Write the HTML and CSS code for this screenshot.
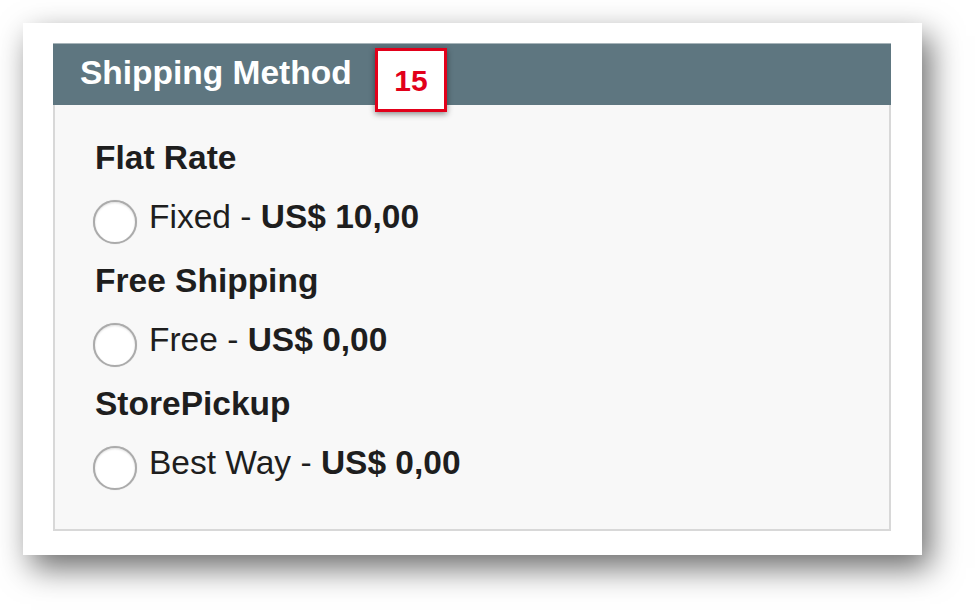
FILE: index.html
```html
<!DOCTYPE html>
<html lang="en">
<head>
<meta charset="utf-8">
<title>Shipping Method</title>
<link rel="stylesheet" href="styles.css">
</head>
<body>
  <div class="page">
    <div class="card">
      <section class="panel">
        <header class="panel-head">
          <h2 class="panel-title">Shipping Method</h2>
          <span class="badge">15</span>
        </header>
        <div class="panel-body">
          <div class="group">
            <h3 class="group-title">Flat Rate</h3>
            <label class="option"><span class="radio"></span><span class="option-text">Fixed - <b>US$ 10,00</b></span></label>
          </div>
          <div class="group">
            <h3 class="group-title">Free Shipping</h3>
            <label class="option"><span class="radio"></span><span class="option-text">Free - <b>US$ 0,00</b></span></label>
          </div>
          <div class="group">
            <h3 class="group-title">StorePickup</h3>
            <label class="option"><span class="radio"></span><span class="option-text">Best Way - <b>US$ 0,00</b></span></label>
          </div>
        </div>
      </section>
    </div>
  </div>
</body>
</html>
```

FILE: styles.css
```css
html, body {
  margin: 0;
  padding: 0;
  background: #ffffff;
}

body {
  font-family: "Liberation Sans", Arial, sans-serif;
  color: #222222;
}

.page {
  width: 978px;
  height: 610px;
  box-sizing: border-box;
  padding: 23px 0 0 23px;
  overflow: hidden;
}

.card {
  width: 899px;
  box-sizing: border-box;
  padding: 20px 31px 24px 30px;
  background: #ffffff;
  box-shadow: 8px 13px 30px rgba(0, 0, 0, 0.58);
}

.panel {
  width: 838px;
}

.panel-head {
  position: relative;
  height: 62px;
  background: #5e7680;
  box-shadow: inset 0 1px 0 #a7b4b9;
  padding-left: 27px;
}

.panel-title {
  margin: 0;
  font-size: 33.5px;
  font-weight: bold;
  line-height: 60px;
  color: #ffffff;
}

.badge {
  position: absolute;
  left: 322px;
  top: 5px;
  width: 72px;
  height: 64px;
  box-sizing: border-box;
  border: 3px solid #e2001a;
  background: #ffffff;
  color: #e2001a;
  font-size: 30px;
  font-weight: bold;
  line-height: 60px;
  text-align: center;
  box-shadow: 0 2px 6px rgba(0, 0, 0, 0.45);
}

.panel-body {
  background: #f8f8f8;
  border: 2px solid #d8d8d8;
  border-top: 0;
  padding: 34px 40px 44px 40px;
  display: flex;
  flex-direction: column;
  gap: 23px;
}

.group {
  display: flex;
  flex-direction: column;
  gap: 18px;
}

.group-title {
  margin: 0;
  font-size: 33.5px;
  font-weight: bold;
  line-height: 38px;
  color: #1e1e1e;
}

.option {
  display: flex;
  align-items: flex-start;
  height: 44px;
  font-size: 33.5px;
  line-height: 44px;
  color: #1e1e1e;
}

.radio {
  flex: none;
  width: 44px;
  height: 44px;
  box-sizing: border-box;
  margin: 5px 12px 0 -2px;
  border-radius: 50%;
  border: 2px solid #ababab;
  background: #ffffff;
  box-shadow: inset 0 1px 2px rgba(0, 0, 0, 0.12), 0 0 1px rgba(0, 0, 0, 0.2);
}

.option-text b {
  font-weight: bold;
}
```
